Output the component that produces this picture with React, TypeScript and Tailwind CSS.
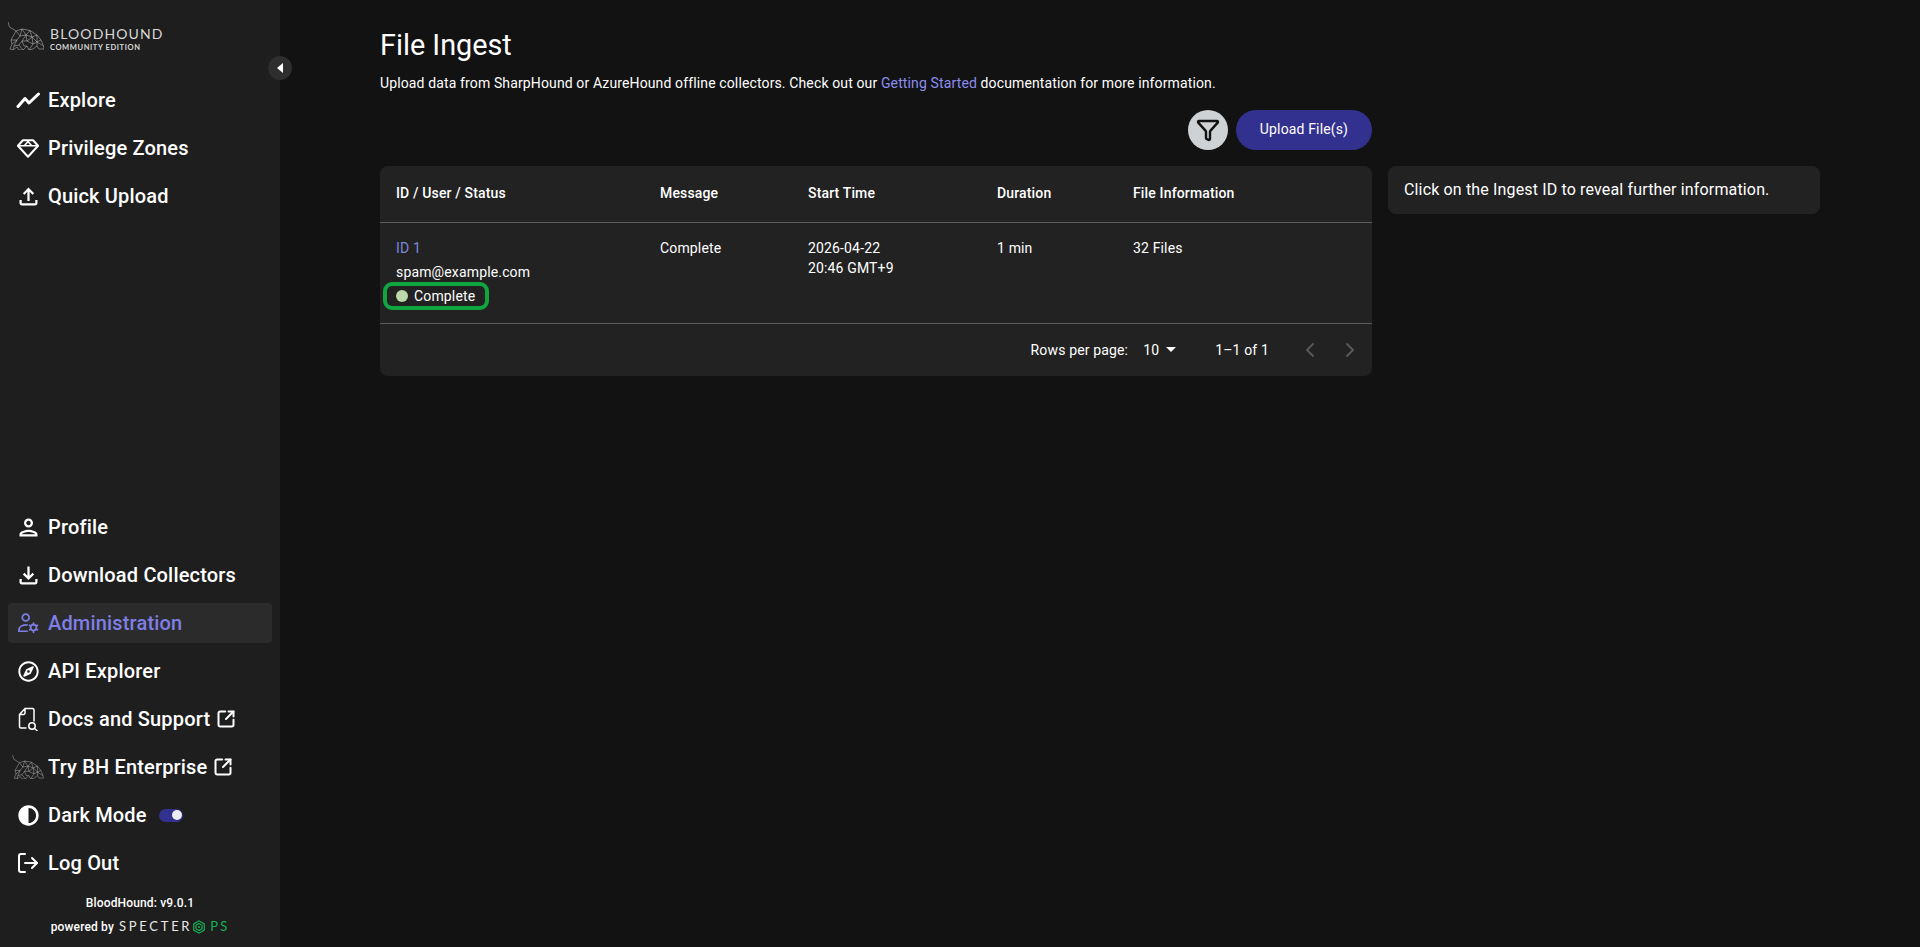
import type { ReactNode } from 'react'
import { ChevronLeft, ChevronRight, Filter, LogOut, SquareArrowOutUpRight } from 'lucide-react'
import { FaAdjust, FaRegCompass } from 'react-icons/fa'
import { MdOutlineFileDownload, MdOutlineFileUpload, MdOutlinePerson } from 'react-icons/md'

const ROBOTO = 'font-[Roboto,sans-serif]'

// low-poly hound, used for the logo and for the enterprise link
function Hound({ className }: { className: string }) {
  return (
    <svg viewBox="0 0 36 28" className={className} fill="none" stroke="#c8c8c8" strokeWidth="0.5">
      <path d="M0 0 1.500 5 8 9 14 7 22 8.500 29 13 33 18 35.500 24 36 27 31 27 29 24 25 27 21 28 19 24 15 28 11 28 9 25 5 28 2 27 4 22 3 18 8 9" />
      <path d="M8 9 12 14 14 7 18 13 22 8.500 24 15 29 13 29 20 33 18M3 18 9 18 12 14 18 13 24 15 29 20 35.500 24M9 18 6 24 11 23 14 19 18 13 19 19 24 15 25 22 29 20 29 24M14 19 19 19 25 22 21 28M11 23 15 28M14 19 16 24 19 24M5 28 6 24M9 18 4 22" />
    </svg>
  )
}

function GemIcon() {
  return (
    <svg viewBox="0 0 24 24" className="h-[22px] w-[22px]" fill="none" stroke="currentColor" strokeWidth="2.200" strokeLinejoin="round">
      <path d="M6.500 3.500h11L23 9.500 12 21.500 1 9.500Z" />
      <path d="M2 9.500h20M8 9.500 12 5l4 4.500" strokeWidth="1.700" />
    </svg>
  )
}

function TrendIcon() {
  return (
    <svg viewBox="0 0 24 24" className="h-[24px] w-[24px]" fill="none" stroke="currentColor" strokeWidth="3" strokeLinecap="round" strokeLinejoin="round">
      <path d="M2 18.500 9 10.500l4 4.500 9.500-9" />
    </svg>
  )
}

function AdminIcon() {
  return (
    <svg viewBox="0 0 24 24" className="h-[22px] w-[22px]" fill="none" stroke="currentColor" strokeWidth="1.900" strokeLinecap="round">
      <circle cx="9.500" cy="6" r="3.700" />
      <path d="M2 21v-1.500c0-3.500 4-5.500 9-5.500M2 21h9" />
      <circle cx="18" cy="17" r="3.200" />
      <path d="M18 12v1.500M18 20.500V22M13.700 14.500l1.300.8M21 18.700l1.300.8M13.700 19.500l1.300-.8M21 15.300l1.300-.8" />
    </svg>
  )
}

function DocsIcon() {
  return (
    <svg viewBox="0 0 20 24" className="h-6 w-5" fill="none" stroke="currentColor" strokeWidth="1.500" strokeLinecap="round" strokeLinejoin="round">
      <path d="M7 1.500h7.500a1.500 1.500 0 0 1 1.500 1.500v11M1.500 7.500 7 1.500V6a1.500 1.500 0 0 1-1.500 1.500H1.500v12A1.500 1.500 0 0 0 3 21h5" />
      <circle cx="14" cy="19" r="3.200" />
      <path d="M16.500 21.500 19 23.500" />
    </svg>
  )
}

function NavItem({ icon, label, active, children }: { icon: ReactNode; label: string; active?: boolean; children?: ReactNode }) {
  return (
    <div
      className={`mx-2 mb-2 flex h-10 items-center rounded text-[20px] font-medium tracking-[0.17px] last:mb-0 ${
        active ? 'bg-[#2b2b2b] text-[#7f7fe6]' : 'text-white'
      }`}
    >
      <span className="flex w-10 shrink-0 items-center justify-center">{icon}</span>
      <span>{label}</span>
      {children}
    </div>
  )
}

function ExternalMark() {
  return <SquareArrowOutUpRight className="ml-[6px] h-5 w-5" strokeWidth={2.400} />
}

function Sidebar() {
  return (
    <aside className="relative flex h-full w-[280px] shrink-0 flex-col justify-between bg-[#1e1e1e] pb-2">
      <div>
        <div className="flex h-20 items-start pl-2 pt-[22px]">
          <Hound className="h-[28px] w-9" />
          <div className="ml-[6px] mt-[4px] text-[#d8d8d8]">
            <div className="font-[Lato,sans-serif] text-[14px] leading-[16px] tracking-[0.08em]">BLOODHOUND</div>
            <div className="mt-[1px] font-[Lato,sans-serif] text-[7.500px] font-bold leading-[9px] tracking-[0.08em]">COMMUNITY EDITION</div>
          </div>
        </div>
        <NavItem icon={<TrendIcon />} label="Explore" />
        <NavItem icon={<GemIcon />} label="Privilege Zones" />
        <NavItem icon={<MdOutlineFileUpload className="h-[27px] w-[27px]" />} label="Quick Upload" />
      </div>

      {/* collapse handle sits across the sidebar edge */}
      <button className="absolute left-[268px] top-[56px] flex h-6 w-6 items-center justify-center rounded-full bg-[#2e2e2e]">
        <span className="h-0 w-0 border-y-[5px] border-r-[6px] border-y-transparent border-r-white" />
      </button>

      <div>
        <NavItem icon={<MdOutlinePerson className="h-[27px] w-[27px]" />} label="Profile" />
        <NavItem icon={<MdOutlineFileDownload className="h-[27px] w-[27px]" />} label="Download Collectors" />
        <NavItem icon={<AdminIcon />} label="Administration" active />
        <NavItem icon={<FaRegCompass className="h-[21px] w-[21px]" />} label="API Explorer" />
        <NavItem icon={<DocsIcon />} label="Docs and Support">
          <ExternalMark />
        </NavItem>
        <NavItem icon={<Hound className="h-6 w-8 shrink-0" />} label="Try BH Enterprise">
          <ExternalMark />
        </NavItem>
        <NavItem icon={<FaAdjust className="h-[21px] w-[21px]" />} label="Dark Mode">
          <span className="ml-3 flex h-[13px] w-6 items-center justify-end rounded-full bg-[#33318f] pr-[1px]">
            <span className="h-[10px] w-[10px] rounded-full bg-[#eeeeee]" />
          </span>
        </NavItem>
        <NavItem icon={<LogOut className="h-6 w-6" strokeWidth={2} />} label="Log Out" />
        <div className="mt-[8px] text-center text-xs font-medium leading-[24px] tracking-[0.15px] text-white">BloodHound: v9.0.1</div>
        <div className="flex h-[24px] items-center justify-center text-xs font-medium tracking-[0.15px] text-white">
          powered by
          <span className="ml-[5px] font-[Lato,sans-serif] text-[13px] font-normal tracking-[0.21em] text-[#e8e8e8]">SPECTER</span>
          <svg viewBox="0 0 16 16" className="h-[14px] w-[14px]" fill="none" stroke="#0fb457" strokeWidth="1.300">
            <path d="M8 1 14 4.500v7L8 15 2 11.500v-7Z" />
            <path d="M8 4 11.500 6v4L8 12 4.500 10V6Z" />
            <circle cx="8" cy="8" r="1.200" fill="#0fb457" stroke="none" />
          </svg>
          <span className="ml-[4px] font-[Lato,sans-serif] text-[13px] font-normal tracking-[0.16em] text-[#0fb457]">PS</span>
        </div>
      </div>
    </aside>
  )
}

function IngestTable() {
  return (
    <div className="overflow-hidden rounded-lg bg-[#222222] text-sm tracking-[0.15px] text-white">
      <table className="w-full table-fixed">
        <colgroup>
          <col className="w-[264px]" />
          <col className="w-[148px]" />
          <col className="w-[189px]" />
          <col className="w-[136px]" />
          <col />
        </colgroup>
        <thead>
          <tr className="h-14 border-b border-[#5c5c5c] text-left font-medium">
            <th className="px-4 pb-[2px] font-medium">ID / User / Status</th>
            <th className="px-4 pb-[2px] font-medium">Message</th>
            <th className="px-4 pb-[2px] font-medium">Start Time</th>
            <th className="px-4 pb-[2px] font-medium">Duration</th>
            <th className="px-4 pb-[2px] font-medium">File Information</th>
          </tr>
        </thead>
        <tbody>
          <tr className="h-[101px] border-b border-[#5c5c5c] align-top">
            <td className="px-4 pt-[13px] leading-6">
              <div className="text-[#7d86dc]">ID 1</div>
              <div>spam@example.com</div>
              <div className="-mx-[13px] -my-[2px] flex h-[28px] w-[106px] items-center rounded-[9px] border-4 border-[#0fa53f] pl-[9px]">
                <span className="mr-[6px] h-3 w-3 rounded-full bg-[#bcd8a8]" />
                Complete
              </div>
            </td>
            <td className="px-4 pt-[13px] leading-6">Complete</td>
            <td className="px-4 pt-[15px] leading-5">
              2026-04-22
              <br />
              20:46 GMT+9
            </td>
            <td className="px-4 pt-[13px] leading-6">1 min</td>
            <td className="px-4 pt-[13px] leading-6">32 Files</td>
          </tr>
        </tbody>
      </table>
      <div className="flex h-[52px] items-center justify-end">
        <span>Rows per page:</span>
        <span className="ml-[15px]">10</span>
        <span className="ml-[7px] h-0 w-0 border-x-[5px] border-t-[5px] border-x-transparent border-t-white" />
        <span className="ml-[39px]">1–1 of 1</span>
        <ChevronLeft className="ml-[29px] h-6 w-6 text-[#5a5a5a]" strokeWidth={1.800} />
        <ChevronRight className="ml-4 mr-[10px] h-6 w-6 text-[#5a5a5a]" strokeWidth={1.800} />
      </div>
    </div>
  )
}

export default function App() {
  return (
    <div className={`flex h-screen w-full overflow-hidden bg-[#121212] ${ROBOTO}`}>
      <Sidebar />
      <main className="flex-1 px-[100px] pt-[25px] text-white">
        <h1 className="text-[28.800px] leading-10">File Ingest</h1>
        <p className="mt-[8px] text-sm leading-5 tracking-[0.13px]">
          Upload data from SharpHound or AzureHound offline collectors. Check out our{' '}
          <span className="text-[#8b8df0]">Getting Started</span> documentation for more information.
        </p>
        <div className="grid grid-cols-[992px_432px] gap-x-4">
          <div>
            <div className="mt-[17px] flex justify-end gap-2">
              <button className="flex h-10 w-10 items-center justify-center rounded-full bg-[#cfd2d4] text-[#121212]">
                <Filter className="h-6 w-6" strokeWidth={2.400} />
              </button>
              <button className="h-10 w-[136px] rounded-full bg-[#33318f] pb-[2px] text-sm tracking-[0.15px] text-white">Upload File(s)</button>
            </div>
            <div className="mt-4">
              <IngestTable />
            </div>
          </div>
          <div className="mt-[73px] flex h-12 items-center rounded-lg bg-[#222222] px-4 text-base tracking-[0.15px]">
            Click on the Ingest ID to reveal further information.
          </div>
        </div>
      </main>
    </div>
  )
}
